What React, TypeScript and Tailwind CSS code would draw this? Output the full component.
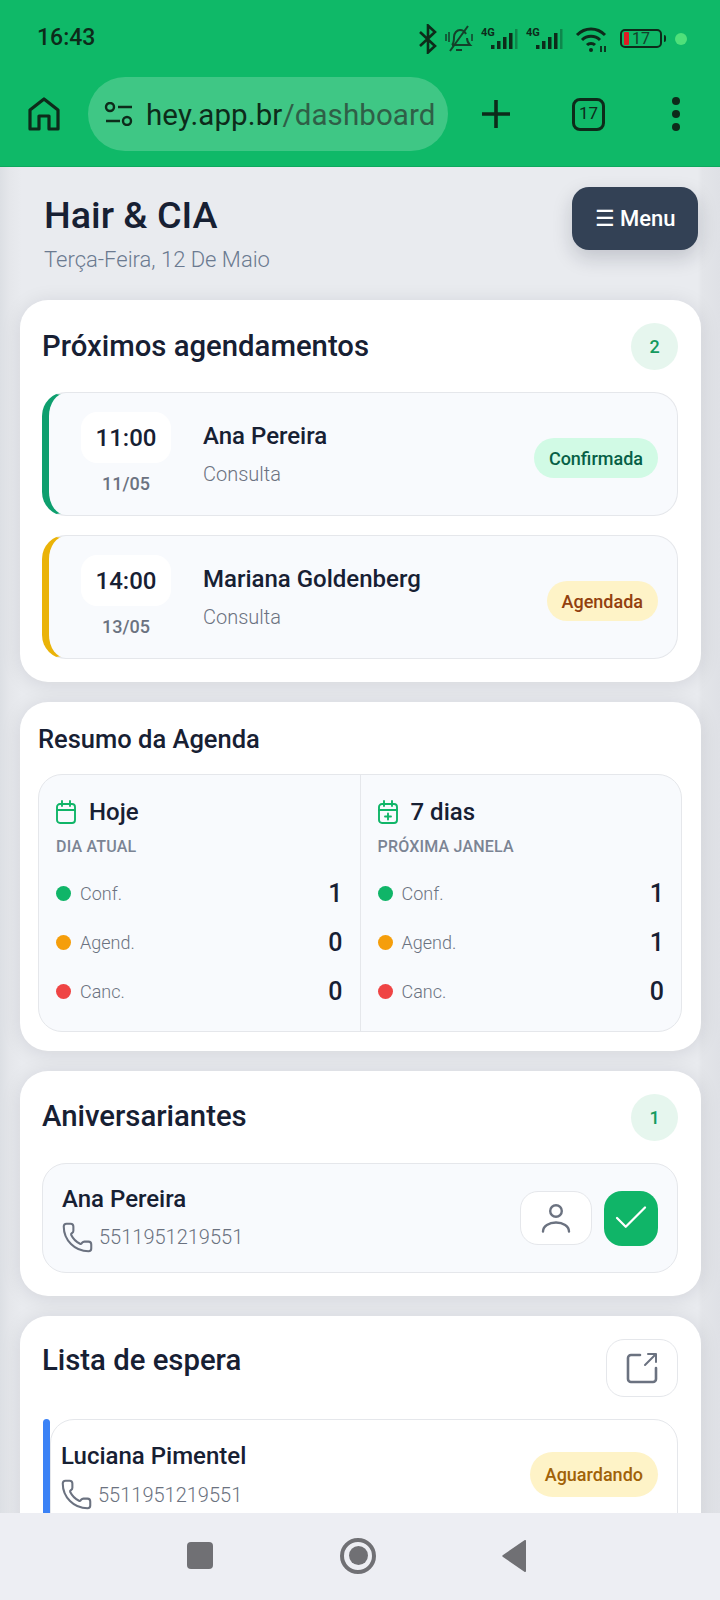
import { Check, Phone } from "lucide-react";

const font = { fontFamily: "Roboto, 'Noto Sans', sans-serif" };

function StatusIcons() {
  return (
    <div className="flex items-center">
      {/* bluetooth */}
      <svg width="20" height="30" viewBox="0 0 20 30" fill="none" stroke="#0d2b1a" strokeWidth="2.6" className="mr-[5px]">
        <path d="M2 8l15 14-7 6.500V1.500L17 8 2 22" />
      </svg>
      {/* muted bell */}
      <svg width="32" height="30" viewBox="0 0 32 30" fill="none" stroke="#14402a" strokeWidth="2" className="mr-[6px]">
        <path d="M9 21c2-2 2-5 2-8 0-4 3-7 6-7s5 2 6 4M24 14c0 3 1 5 3 7H9" />
        <path d="M13 26h6M7 27L25 2" />
        <path d="M3 10v7M6 8v10M29 10v7" strokeWidth="1.5" />
      </svg>
      <Signal />
      <Signal />
      {/* wifi */}
      <svg width="32" height="28" viewBox="0 0 32 28" fill="none" stroke="#0d2b1a" strokeWidth="3" className="ml-[4px] mr-[13px]">
        <path d="M2 10c8-8 20-8 28 0M7 15c5-5 13-5 18 0M12 20c2-2 6-2 8 0" />
        <circle cx="16" cy="25" r="2" fill="#0d2b1a" stroke="none" />
        <path d="M26 21v6M30 21v6" strokeWidth="1.8" />
      </svg>
      {/* battery */}
      <div className="flex items-center mr-[9px]">
        <div className="w-[42px] h-[19px] rounded-[5px] border-2 border-[#0d2b1a] flex items-center pl-[2px]">
          <div className="w-[5px] h-[13px] rounded-[1px] bg-[#e01b24]" />
          <span className="text-[16px] leading-none text-[#14402a] ml-[3px]">17</span>
        </div>
        <div className="w-[2px] h-[7px] bg-[#0d2b1a] ml-[2px] rounded-r-sm" />
      </div>
      <div className="w-[12px] h-[12px] rounded-full bg-[#4fe07a]" />
    </div>
  );
}

function Signal() {
  return (
    <svg width="42" height="26" viewBox="0 0 42 26" className="mr-[3px]">
      <text x="0" y="10" fontSize="11" fontWeight="700" fill="#0d2b1a" fontFamily="Roboto, sans-serif">4G</text>
      <rect x="10" y="19" width="3.5" height="4" fill="#0d2b1a" />
      <rect x="16" y="15" width="3.5" height="8" fill="#0d2b1a" />
      <rect x="22" y="11" width="3.5" height="12" fill="#0d2b1a" />
      <rect x="28" y="7" width="3.5" height="16" fill="#0d2b1a" />
      <rect x="34" y="3" width="2.5" height="20" fill="#0d2b1a" opacity="0.35" />
    </svg>
  );
}

function ChromeBar() {
  return (
    <header className="bg-[#0fb968] h-[167px] shrink-0 border-b border-[#0ea85e]">
      <div className="h-[77px] pl-[37px] pr-[33px] flex items-center justify-between">
        <span className="text-[23px] font-medium text-[#0d2b1a]">16:43</span>
        <StatusIcons />
      </div>
      <div className="flex items-center pl-[28px] pr-[40px]">
        <svg width="32" height="34" viewBox="0 0 32 34" fill="none" stroke="#0d2b1a" strokeWidth="3.2" strokeLinejoin="round">
          <path d="M2 32V13L16 2l14 11v19H21V19H11v13z" />
        </svg>
        <div className="ml-[28px] w-[360px] h-[74px] rounded-full bg-[#3fc785] flex items-center pl-[16px]">
          <svg width="30" height="24" viewBox="0 0 30 24" fill="none" stroke="#0d2b1a" strokeWidth="2.4">
            <circle cx="6" cy="5" r="4" />
            <path d="M14 5h14M2 19h14" />
            <circle cx="23" cy="19" r="4" />
          </svg>
          <span className="ml-[12px] mt-[2px] text-[29.5px] tracking-[0.1px] text-[#0d2b1a]">
            hey.app.br<span className="text-[#2f5f47]">/dashboard</span>
          </span>
        </div>
        <svg width="32" height="32" viewBox="0 0 32 32" stroke="#0d2b1a" strokeWidth="3.6" className="ml-[32px]">
          <path d="M16 2v28M2 16h28" />
        </svg>
        <div className="ml-[60px] w-[33px] h-[33px] rounded-[8px] border-[3px] border-[#0d2b1a] flex items-center justify-center text-[17px] text-[#0d2b1a]">
          17
        </div>
        <div className="ml-auto flex flex-col gap-[5px]">
          <div className="w-[8px] h-[8px] rounded-full bg-[#0d2b1a]" />
          <div className="w-[8px] h-[8px] rounded-full bg-[#0d2b1a]" />
          <div className="w-[8px] h-[8px] rounded-full bg-[#0d2b1a]" />
        </div>
      </div>
    </header>
  );
}

function Card({ children, className }: { children: React.ReactNode; className: string }) {
  return (
    <section className={`bg-white rounded-[28px] shrink-0 shadow-[0_2px_20px_rgba(15,23,42,0.1)] ${className}`}>
      {children}
    </section>
  );
}

function CountBadge({ value }: { value: number }) {
  return (
    <div className="w-[47px] h-[47px] rounded-full bg-[#e6f6ee] flex items-center justify-center text-[18px] font-medium text-[#159a5f]">
      {value}
    </div>
  );
}

function Appointment(props: { time: string; date: string; name: string; status: string; bar: string; pill: string }) {
  return (
    <div className={`h-[124px] rounded-[24px] border border-[#e5e7eb] border-l-[7px] bg-[#f8fafd] flex items-center pl-[32px] pr-[19px] ${props.bar}`}>
      <div className="flex flex-col items-center w-[90px]">
        <div className="w-[90px] h-[51px] rounded-[16px] bg-white flex items-center justify-center text-[24px] font-medium text-[#172033]">
          {props.time}
        </div>
        <div className="mt-[9px] text-[18px] leading-[24px] font-medium text-[#6b7280]">{props.date}</div>
      </div>
      <div className="ml-[32px] flex-1 -mt-[2px]">
        <div className="text-[24px] leading-[32px] font-medium text-[#172033]">{props.name}</div>
        <div className="mt-[9px] text-[20px] leading-[26px] font-light text-[#6b7280]">Consulta</div>
      </div>
      <div className={`mt-[8px] h-[40px] px-[15px] rounded-full flex items-center text-[18px] font-medium ${props.pill}`}>
        {props.status}
      </div>
    </div>
  );
}

const dots = ["bg-[#10b568]", "bg-[#f59e0b]", "bg-[#ef4444]"];
const labels = ["Conf.", "Agend.", "Canc."];

function CalendarIcon({ plus }: { plus?: boolean }) {
  return (
    <svg width="20" height="24" viewBox="0 0 20 24" fill="none" stroke="#10b568" strokeWidth="1.9" strokeLinecap="round" strokeLinejoin="round">
      <rect x="1" y="4" width="18" height="19" rx="3" />
      <path d="M1 10h18M6 1v5M14 1v5" />
      {plus && <path d="M10 13.500v6M7 16.500h6" />}
    </svg>
  );
}

function SummaryColumn(props: { icon: React.ReactNode; title: string; sub: string; values: number[]; divider?: boolean }) {
  return (
    <div className={`flex-1 pl-[17px] pr-[17px] pt-[21px] ${props.divider ? "border-l border-[#e5e7eb]" : ""}`}>
      <div className="flex items-center h-[32px]">
        {props.icon}
        <span className="ml-[13px] text-[24px] font-medium text-[#172033]">{props.title}</span>
      </div>
      <div className="mt-[9px] text-[16px] leading-[20px] font-medium tracking-[0.2px] text-[#7b8494]">{props.sub}</div>
      <div className="mt-[12px] flex flex-col">
        {props.values.map((v, i) => (
          <div key={labels[i]} className="h-[49px] flex items-center">
            <div className={`w-[15px] h-[15px] rounded-full ${dots[i]}`} />
            <span className="ml-[9px] text-[18px] font-light text-[#6b7280]">{labels[i]}</span>
            <span className="ml-auto text-[25px] font-medium text-[#172033]">{v}</span>
          </div>
        ))}
      </div>
    </div>
  );
}

function PhoneLine() {
  return (
    <div className="flex items-center mt-[6px]">
      <Phone size={33} strokeWidth={1.5} className="text-[#6b7280] -ml-[1px]" />
      <span className="ml-[5px] text-[20px] font-light text-[#6b7280]">5511951219551</span>
    </div>
  );
}

export default function App() {
  return (
    <div className="w-[720px] h-[1600px] flex flex-col overflow-hidden bg-[#e9ebef]" style={font}>
      <ChromeBar />
      <main className="flex-1 min-h-0 overflow-hidden pl-[20px] pr-[19px] flex flex-col bg-[linear-gradient(90deg,#dcdfe4_0,#e5e7eb_10px,#e9ebef_22px,#e9ebef_calc(100%-22px),#e3e5e9_calc(100%-18px),#dfe1e6_100%)]">
        <div className="shrink-0 h-[133px] flex items-start justify-between pl-[24px] pr-[3px] pt-[20px]">
          <div>
            <h1 className="text-[37.7px] leading-[50px] font-medium text-[#172033] mt-[3px]">Hair &amp; CIA</h1>
            <p className="mt-[6px] text-[22px] leading-[28px] font-light text-[#6b7a90]">Terça-Feira, 12 De Maio</p>
          </div>
          <button className="w-[126px] h-[63px] rounded-[17px] bg-[#334155] text-white text-[22px] font-medium shadow-[0_8px_20px_rgba(15,23,42,0.18)]">
            ☰ Menu
          </button>
        </div>

        <Card className="pl-[22px] pr-[23px] pt-[23px] pb-[23px]">
          <div className="flex items-center justify-between h-[47px]">
            <h2 className="text-[29.3px] font-medium text-[#172033]">Próximos agendamentos</h2>
            <CountBadge value={2} />
          </div>
          <div className="mt-[22px] flex flex-col gap-[19px]">
            <Appointment time="11:00" date="11/05" name="Ana Pereira" status="Confirmada" bar="border-l-[#0e9f6e]" pill="bg-[#d1fae5] text-[#065f46]" />
            <Appointment time="14:00" date="13/05" name="Mariana Goldenberg" status="Agendada" bar="border-l-[#eab308]" pill="bg-[#fef3c7] text-[#92400e]" />
          </div>
        </Card>

        <Card className="mt-[20px] pl-[18px] pr-[19px] pt-[20px] pb-[19px]">
          <h2 className="text-[25.5px] leading-[34px] font-medium text-[#172033]">Resumo da Agenda</h2>
          <div className="mt-[18px] h-[258px] rounded-[24px] border border-[#e5e7eb] bg-[#f8fafd] flex">
            <SummaryColumn icon={<CalendarIcon />} title="Hoje" sub="DIA ATUAL" values={[1, 0, 0]} />
            <SummaryColumn icon={<CalendarIcon plus />} title="7 dias" sub="PRÓXIMA JANELA" values={[1, 1, 0]} divider />
          </div>
        </Card>

        <Card className="mt-[20px] pl-[22px] pr-[23px] pt-[23px] pb-[23px]">
          <div className="flex items-center justify-between h-[47px]">
            <h2 className="text-[29.3px] font-medium text-[#172033] -mt-[2px]">Aniversariantes</h2>
            <CountBadge value={1} />
          </div>
          <div className="mt-[22px] h-[110px] rounded-[24px] border border-[#e5e7eb] bg-[#f8fafd] flex items-center pl-[19px] pr-[19px]">
            <div className="flex-1">
              <div className="text-[24px] leading-[32px] font-medium text-[#172033]">Ana Pereira</div>
              <PhoneLine />
            </div>
            <div className="w-[72px] h-[54px] rounded-[18px] border border-[#e5e7eb] bg-white flex items-center justify-center">
              <svg width="30" height="29" viewBox="0 0 30 29" fill="none" stroke="#6b7280" strokeWidth="2.4" strokeLinecap="round">
                <circle cx="15" cy="7" r="5.8" />
                <path d="M2 27.500c0-5.500 6-9 13-9s13 3.500 13 9" />
              </svg>
            </div>
            <div className="ml-[12px] w-[54px] h-[55px] rounded-[18px] bg-[#10b568] flex items-center justify-center">
              <Check size={42} strokeWidth={1.3} className="text-white" />
            </div>
          </div>
        </Card>

        <Card className="mt-[20px] pl-[22px] pr-[23px] pt-[23px] pb-[23px]">
          <div className="flex items-start justify-between h-[58px]">
            <h2 className="text-[29.3px] leading-[42px] font-medium text-[#172033]">Lista de espera</h2>
            <button className="w-[72px] h-[58px] rounded-[18px] border border-[#e5e7eb] bg-white flex items-center justify-center">
              <svg width="32" height="32" viewBox="0 0 32 32" fill="none" stroke="#6b7280" strokeWidth="2.6" strokeLinecap="round" strokeLinejoin="round">
                <path d="M14 3H5a3 3 0 0 0-3 3v21a3 3 0 0 0 3 3h22a3 3 0 0 0 3-3V16" />
                <path d="M19 13L30 2M22 2h8v8" strokeWidth="2" />
              </svg>
            </button>
          </div>
          <div className="mt-[22px] h-[130px] flex">
            <div className="w-[7px] ml-[1px] rounded-t-[5px] bg-[#3b82f6] shrink-0" />
            <div className="flex-1 rounded-[24px] border border-[#e5e7eb] bg-white flex items-start pl-[10px] pr-[19px] pt-[20px]">
              <div className="flex-1">
                <div className="text-[24px] leading-[32px] font-medium text-[#172033]">Luciana Pimentel</div>
                <PhoneLine />
              </div>
              <div className="mt-[12px] h-[45px] px-[15px] rounded-full bg-[#fef3c7] flex items-center text-[18px] font-medium text-[#a16207]">
                Aguardando
              </div>
            </div>
          </div>
        </Card>
      </main>
      <footer className="shrink-0 h-[87px] bg-[#edeef3] flex items-center pl-[187px]">
        <div className="w-[26px] h-[27px] rounded-[4px] bg-[#707074] -mt-[2px]" />
        <div className="ml-[127px] w-[36px] h-[36px] rounded-full border-[4px] border-[#707074] flex items-center justify-center -mt-[2px]">
          <div className="w-[19px] h-[19px] rounded-full bg-[#707074]" />
        </div>
        <svg width="25" height="32" viewBox="0 0 25 32" className="ml-[126px] -mt-[2px]">
          <path d="M24 1v30a1 1 0 0 1-1.600.8L1 17a1.200 1.200 0 0 1 0-2L22.400.2A1 1 0 0 1 24 1z" fill="#707074" />
        </svg>
      </footer>
    </div>
  );
}
